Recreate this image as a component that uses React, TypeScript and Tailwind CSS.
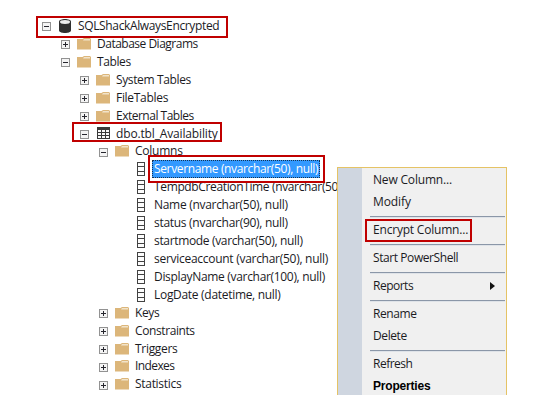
import React from "react";

function Expander({ open }: { open?: boolean }) {
  return (
    <svg className="mt-[2px] h-[9px] w-[9px] shrink-0" viewBox="0 0 9 9" shapeRendering="crispEdges">
      <rect x="0.5" y="0.5" width="8" height="8" fill="#f4f4f4" stroke="#929292" />
      <path d="M2 4h5v1H2z" fill="#26262e" />
      {!open && <path d="M4 2h1v5H4z" fill="#26262e" />}
    </svg>
  );
}

function Folder() {
  return (
    <svg className="h-[12px] w-[14px] shrink-0" viewBox="0 0 14 12">
      <path d="M0 1h5.5L7 0h6l1 1v10.5H0z" fill="#dcb67a" />
      <path d="M6 2.6 7 1h6v1.6z" fill="#f1e3ca" />
    </svg>
  );
}

function Database() {
  return (
    <svg className="h-[14px] w-[12px] shrink-0" viewBox="0 0 12 14">
      <path d="M0 2.8C0-.9 12-.9 12 2.8v8.4c0 3.7-12 3.7-12 0z" fill="#303030" />
      <ellipse cx="6" cy="3" rx="5" ry="1.9" fill="#eeeeee" />
    </svg>
  );
}

function TableIcon() {
  return (
    <svg className="h-[12px] w-[13px] shrink-0" viewBox="0 0 13 12" shapeRendering="crispEdges">
      <path d="M0 0h13v12H0z" fill="#3a3a3a" />
      <path d="M1 3h3v2H1zM5 3h3v2H5zM9 3h3v2H9zM1 6h3v2H1zM5 6h3v2H5zM9 6h3v2H9zM1 9h3v2H1zM5 9h3v2H5zM9 9h3v2H9z" fill="#fafafa" />
    </svg>
  );
}

function ColumnIcon() {
  return (
    <svg className="h-[14px] w-[8px] shrink-0" viewBox="0 0 8 14" shapeRendering="crispEdges">
      <path d="M0 0h8v14H0z" fill="#424242" />
      <path d="M1 1h6v3H1zM1 5h6v4H1zM1 10h6v3H1z" fill="#fcfcfc" />
    </svg>
  );
}

const indents = ["pl-[42px]", "pl-[61px]", "pl-[80px]", "pl-[99px]"];

type NodeProps = { level: number; label: string; open?: boolean; kind?: "db" | "table"; tracking?: string };

function TreeNode({ level, label, open, kind, tracking = "" }: NodeProps) {
  return (
    <div className={`flex h-[17.93px] items-center ${indents[level]}`}>
      <Expander open={open} />
      <div className={`flex w-[27px] shrink-0 items-center ${kind ? "pl-[8px]" : "pl-[7px]"}`}>
        {kind === "db" ? <Database /> : kind === "table" ? <TableIcon /> : <Folder />}
      </div>
      <span className={tracking}>{label}</span>
    </div>
  );
}

function ColumnNode({ label, selected, tracking = "" }: { label: string; selected?: boolean; tracking?: string }) {
  return (
    <div className="flex h-[17.93px] items-center pl-[137px]">
      <ColumnIcon />
      {selected ? (
        <span className="ml-[7px] flex h-[18px] w-[168px] items-center border border-dotted border-[#18334e] bg-[#3399ff] pl-px text-white">
          <span className={tracking}>{label}</span>
        </span>
      ) : (
        <span className={`ml-[9px] ${tracking}`}>{label}</span>
      )}
    </div>
  );
}

function MenuItem({ label, bold, arrow, tracking = "" }: { label: string; bold?: boolean; arrow?: boolean; tracking?: string }) {
  return (
    <div className={`flex h-[22px] items-center justify-between pr-[10px] pl-[11px] ${bold ? "font-['Liberation_Sans',sans-serif] font-bold text-black" : ""}`}>
      <span className={tracking}>{label}</span>
      {arrow && (
        <svg className="h-[8px] w-[5px]" viewBox="0 0 5 8">
          <path d="M0 0 5 4 0 8z" fill="#111" />
        </svg>
      )}
    </div>
  );
}

function Separator() {
  return <div className="mt-[3px] mb-px ml-[8px] h-[2px] border-t border-[#8b97a8] bg-[#dfe3e8]" />;
}

const columns: [string, string][] = [
  ["TempdbCreationTime (nvarchar(50), null)", "tracking-[-0.36px]"],
  ["Name (nvarchar(50), null)", "tracking-[-0.3px]"],
  ["status (nvarchar(90), null)", "tracking-[-0.29px]"],
  ["startmode (varchar(50), null)", "tracking-[-0.34px]"],
  ["serviceaccount (varchar(50), null)", "tracking-[-0.28px]"],
  ["DisplayName (varchar(100), null)", "tracking-[-0.32px]"],
  ["LogDate (datetime, null)", "tracking-[-0.3px]"],
];

export default function App() {
  return (
    <div className="relative h-[412px] w-[558px] overflow-hidden bg-white pt-[17px] font-['Open_Sans','Noto_Sans',sans-serif] text-[12px] leading-[18px] whitespace-nowrap text-[#1b1b1f]">
      <TreeNode level={0} label="SQLShackAlwaysEncrypted" open kind="db" tracking="tracking-[-0.36px]" />
      <TreeNode level={1} label="Database Diagrams" tracking="tracking-[-0.5px]" />
      <TreeNode level={1} label="Tables" open tracking="tracking-[-0.4px]" />
      <TreeNode level={2} label="System Tables" tracking="tracking-[-0.37px]" />
      <TreeNode level={2} label="FileTables" tracking="tracking-[-0.3px]" />
      <TreeNode level={2} label="External Tables" tracking="tracking-[-0.5px]" />
      <TreeNode level={2} label="dbo.tbl_Availability" open kind="table" tracking="tracking-[-0.15px]" />
      <TreeNode level={3} label="Columns" open tracking="tracking-[-0.25px]" />
      <ColumnNode label="Servername (nvarchar(50), null)" selected tracking="tracking-[-0.36px]" />
      {columns.map(([label, tracking]) => (
        <ColumnNode key={label} label={label} tracking={tracking} />
      ))}
      <TreeNode level={3} label="Keys" tracking="tracking-[-0.4px]" />
      <TreeNode level={3} label="Constraints" tracking="tracking-[-0.4px]" />
      <TreeNode level={3} label="Triggers" tracking="tracking-[-0.3px]" />
      <TreeNode level={3} label="Indexes" tracking="tracking-[-0.6px]" />
      <TreeNode level={3} label="Statistics" tracking="tracking-[-0.3px]" />

      <div className="absolute top-[16px] left-[36px] h-[22px] w-[192px] border-2 border-[#c00000]" />
      <div className="absolute top-[122px] left-[72px] h-[20px] w-[150px] border-2 border-[#c00000]" />
      <div className="absolute top-[155px] left-[148px] h-[28px] w-[177px] border-2 border-[#c00000]" />

      <div className="absolute top-[167px] left-[337px] flex h-[228px] w-[170px] border border-b-0 border-[#e5c365] bg-[#f0f0f0]">
        <div className="w-[24px] shrink-0 bg-[#cfd6e0]" />
        <div className="flex-1 pt-px pr-px">
          <MenuItem label="New Column..." tracking="tracking-[-0.18px]" />
          <MenuItem label="Modify" tracking="tracking-[-0.1px]" />
          <Separator />
          <MenuItem label="Encrypt Column..." tracking="tracking-[-0.2px]" />
          <Separator />
          <MenuItem label="Start PowerShell" tracking="tracking-[-0.42px]" />
          <Separator />
          <MenuItem label="Reports" arrow tracking="tracking-[-0.5px]" />
          <Separator />
          <MenuItem label="Rename" tracking="tracking-[-0.4px]" />
          <MenuItem label="Delete" tracking="tracking-[-0.4px]" />
          <Separator />
          <MenuItem label="Refresh" tracking="tracking-[-0.5px]" />
          <MenuItem label="Properties" bold tracking="tracking-[-0.2px]" />
        </div>
      </div>
      <div className="absolute top-[219px] left-[365px] h-[23px] w-[107px] border-2 border-[#c00000]" />
    </div>
  );
}
